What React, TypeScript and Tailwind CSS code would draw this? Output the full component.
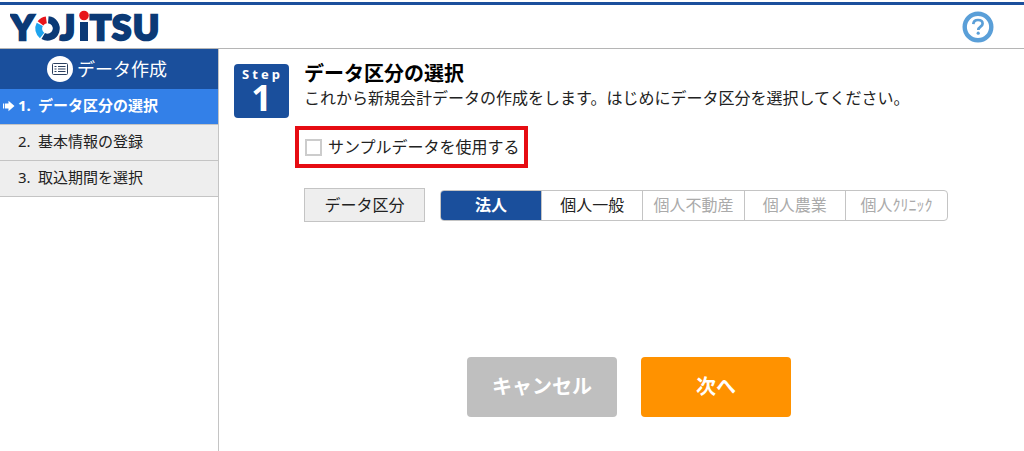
import { useState } from "react";

const steps = ["データ区分の選択", "基本情報の登録", "取込期間を選択"];

const categories = [
  { name: "法人", enabled: true },
  { name: "個人一般", enabled: true },
  { name: "個人不動産", enabled: false },
  { name: "個人農業", enabled: false },
  { name: "個人ｸﾘﾆｯｸ", enabled: false },
];

function Logo() {
  return (
    <svg
      width="160"
      height="44"
      viewBox="0 0 160 44"
      role="img"
      aria-label="YOJiTSU"
      fill="#0b3a76"
      fontSize="35"
      fontWeight="900"
      fontFamily="Lato, 'Open Sans', sans-serif"
    >
      <g stroke="#0b3a76" strokeWidth="2.500">
        <text x="1" y="35">Y</text>
        <text x="50" y="35">J</text>
        <text x="80" y="35">T</text>
        <text x="102" y="35">S</text>
        <text x="123" y="35">U</text>
      </g>
      <g fill="none" strokeWidth="7">
        <path d="M38.300 14.800A8.700 8.700 0 1 1 33.200 31" stroke="#0b3a76" />
        <path d="M32.100 30.400A8.700 8.700 0 0 1 29.800 19.400" stroke="#1ea4ee" />
        <path d="M30.500 18.400A8.700 8.700 0 0 1 36.300 14.900" stroke="#e8151b" />
      </g>
      <rect x="70" y="17" width="8" height="19" />
      <circle cx="74" cy="10.500" r="4.800" fill="#e8151b" />
    </svg>
  );
}

function HelpIcon() {
  return (
    <svg width="32" height="32" viewBox="0 0 32 32" fill="none" aria-hidden="true">
      <circle cx="16" cy="16" r="13.300" stroke="#5a9fd8" strokeWidth="4.400" />
      <path
        d="M11.300 13.200C11.500 10.300 13.500 9 16 9C18.800 9 20.600 10.500 20.600 12.700C20.600 15.700 16.300 15.500 16.300 19"
        stroke="#5a9fd8"
        strokeWidth="2.700"
      />
      <circle cx="16.200" cy="22.200" r="1.600" fill="#5a9fd8" />
    </svg>
  );
}

function ListIcon() {
  return (
    <svg width="26" height="26" viewBox="0 0 26 26" fill="none" aria-hidden="true">
      <circle cx="13" cy="13" r="13" fill="#fff" />
      <rect x="5.500" y="7.500" width="15" height="11" rx="1" stroke="#2b3f5e" />
      <path d="M7.500 10.500h2M7.500 13h2M7.500 15.500h2M11 10.500h7.500M11 13h7.500M11 15.500h7.500" stroke="#2b3f5e" strokeWidth="1.200" />
    </svg>
  );
}

function ArrowIcon() {
  return (
    <svg width="12" height="12" viewBox="0 0 12 12" fill="#fff" aria-hidden="true">
      <path d="M0 3.500h1.200v5H0zM2 3.500h3.500V.8L11.500 6l-6 5.200V8.500H2z" />
    </svg>
  );
}

export default function App() {
  const [sample, setSample] = useState(false);
  const [category, setCategory] = useState("法人");

  return (
    <div className="flex min-h-screen flex-col bg-white font-['Noto_Sans','Noto_Sans_CJK_JP',sans-serif] text-[#222]">
      <header className="pt-0.5">
        <div className="h-[3px] bg-[#1b4f9c]" />
        <div className="flex h-11 items-center justify-between border-b border-[#b5b5b5] pr-[30px] pl-2.5">
          <Logo />
          <button type="button" aria-label="ヘルプ">
            <HelpIcon />
          </button>
        </div>
      </header>

      <div className="flex grow">
        <aside className="w-[219px] shrink-0 border-r border-[#c4c4c4]">
          <h2 className="flex h-10 items-center justify-center gap-1 bg-[#1a4f9c] pr-1 text-lg text-white">
            <ListIcon />
            データ作成
          </h2>
          <ol className="text-[15px]">
            {steps.map((step, i) => (
              <li
                key={step}
                aria-current={i === 0 ? "step" : undefined}
                className={
                  i === 0
                    ? "flex h-9 items-center border-b border-[#c4c4c4] bg-[#3380e8] pb-0.5 font-bold text-white"
                    : "flex h-9 items-center border-b border-[#c4c4c4] bg-[#eee] pb-0.5"
                }
              >
                <span className="flex w-[18px] shrink-0 justify-center">{i === 0 && <ArrowIcon />}</span>
                <span className="w-5 shrink-0">{i + 1}.</span>
                {step}
              </li>
            ))}
          </ol>
        </aside>

        <main className="flex grow flex-col px-[15px] pt-[15px]">
          <div className="flex gap-[15px]">
            <div className="flex h-[54px] w-[55px] shrink-0 flex-col items-center rounded bg-[#1a4f9c] pt-0.5 text-white">
              <span className="pl-0.5 text-[13px] leading-4 font-bold tracking-[3px]">Step</span>
              <span className="text-4xl leading-8 font-bold">1</span>
            </div>
            <div>
              <h1 className="text-xl leading-5 font-bold text-black">データ区分の選択</h1>
              <p className="mt-0.5 leading-6">
                これから新規会計データの作成をします。はじめにデータ区分を選択してください。
              </p>
            </div>
          </div>

          <label className="mt-2 ml-[61px] flex h-[42px] items-center gap-1.5 self-start border-4 border-[#e60c12] pr-1 pl-1.5">
            <input
              type="checkbox"
              checked={sample}
              onChange={(e) => setSample(e.target.checked)}
              className="size-[17px] appearance-none border-2 border-[#ccc] bg-white checked:bg-[#3380e8]"
            />
            サンプルデータを使用する
          </label>

          <div className="mt-5 ml-[70px] flex items-center gap-[15px]">
            <span id="category-label" className="flex h-[34px] w-[121px] shrink-0 items-center justify-center border border-[#c4c4c4] bg-[#eee]">
              データ区分
            </span>
            <div
              role="group"
              aria-labelledby="category-label"
              className="grid h-[31px] w-full max-w-[508px] grid-cols-5 divide-x divide-[#c4c4c4] overflow-hidden rounded border border-[#c4c4c4]"
            >
              {categories.map(({ name, enabled }) => (
                <button
                  key={name}
                  type="button"
                  disabled={!enabled}
                  aria-pressed={category === name}
                  onClick={() => setCategory(name)}
                  className={
                    category === name
                      ? "bg-[#1a4f9c] font-bold text-white"
                      : "whitespace-nowrap disabled:text-[#aaa]"
                  }
                >
                  {name}
                </button>
              ))}
            </div>
          </div>

          <div className="mt-[135px] mb-8 ml-[233px] flex gap-6 text-xl font-bold text-white">
            <button type="button" className="h-[60px] w-[150px] rounded bg-[#bfbfbf]">
              キャンセル
            </button>
            <button type="button" className="h-[60px] w-[150px] rounded bg-[#ff9200]">
              次へ
            </button>
          </div>
        </main>
      </div>
    </div>
  );
}
